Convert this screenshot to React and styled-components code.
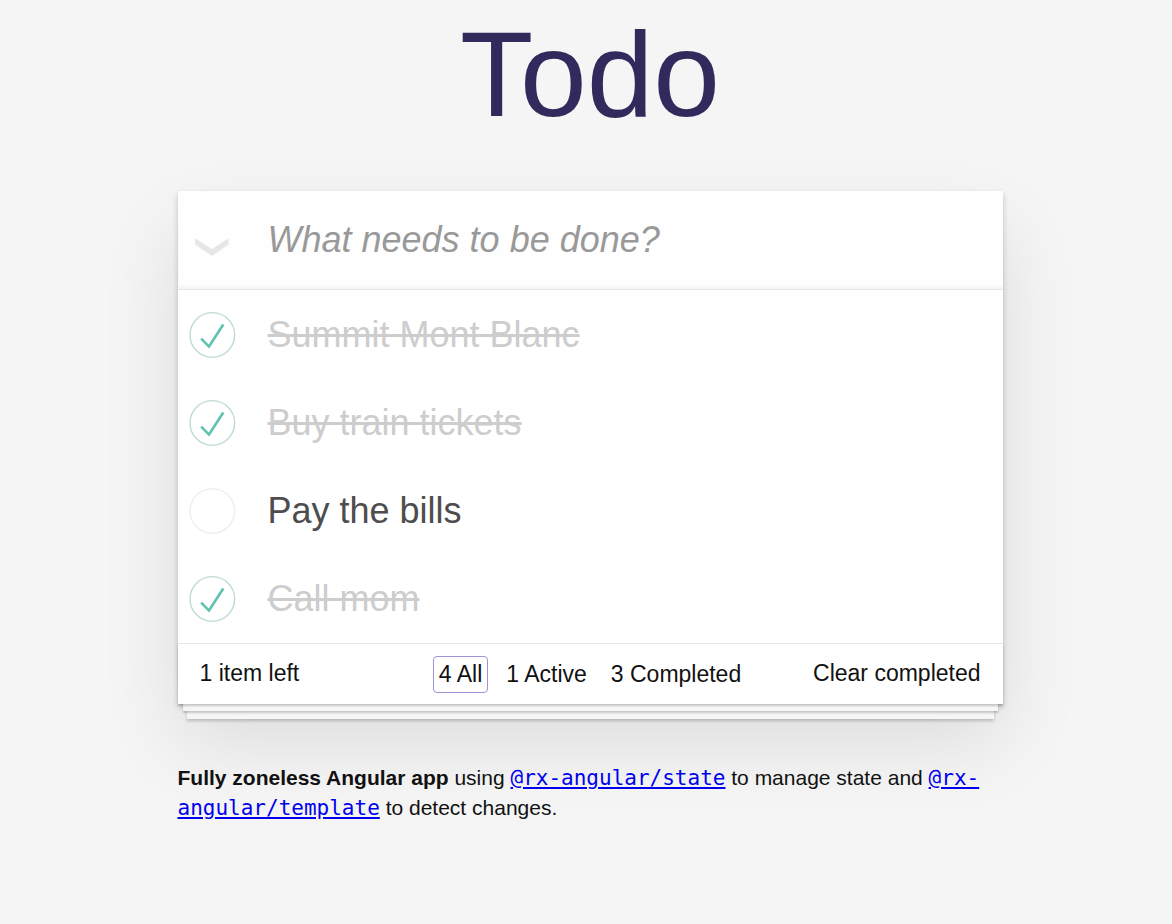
import React, { useState } from "react";
import styled, { createGlobalStyle } from "styled-components";

const GlobalStyle = createGlobalStyle`
  *, *::before, *::after { box-sizing: border-box; }
  body {
    margin: 0;
    background: #f5f5f5;
    color: #111;
    font-family: "Liberation Sans", Arial, sans-serif;
  }
`;

const Page = styled.main`
  padding: 14px 0 100px 8px;
`;

const Column = styled.div`
  max-width: 825px;
  margin: 0 auto;
`;

const Title = styled.h1`
  margin: 0 0 57px;
  font-size: 120px;
  line-height: 120px;
  font-weight: 400;
  text-align: center;
  color: #32295c;
`;

const Card = styled.section`
  background: #fff;
  box-shadow: 0 3px 6px rgba(0, 0, 0, 0.2), 0 38px 75px rgba(0, 0, 0, 0.1);
`;

const EntryRow = styled.form`
  display: grid;
  grid-template-columns: 70px 1fr;
  height: 98px;
  background: #fefefe;
  box-shadow: inset 0 -3px 2px rgba(0, 0, 0, 0.03);
`;

const HiddenCheckbox = styled.input`
  grid-area: 1 / 1;
  appearance: none;
  width: 100%;
  height: 100%;
  margin: 0;
  cursor: pointer;
`;

const Toggle = styled.label`
  display: grid;
  place-items: center;

  svg {
    grid-area: 1 / 1;
    pointer-events: none;
  }
`;

const ToggleAll = styled(Toggle)`
  padding-top: 14px;
`;

const EntryInput = styled.input`
  min-width: 0;
  padding: 0 20px;
  border: 0;
  outline: 0;
  background: transparent;
  color: #4d4d4d;
  font: 36px "Liberation Sans", Arial, sans-serif;

  &::placeholder {
    color: #999;
    font-style: italic;
    opacity: 1;
  }
`;

const List = styled.ul`
  margin: 0;
  padding: 1px 0 0;
  list-style: none;
  border-top: 1px solid #e6e6e6;
`;

const Item = styled.li`
  display: grid;
  grid-template-columns: 70px 1fr;
  min-height: 88px;
`;

const ItemText = styled.label`
  padding: 22px 20px;
  font-size: 36px;
  line-height: 44px;
  color: ${(p) => (p.$done ? "#cdcdcd" : "#4d4d4d")};
  text-decoration: ${(p) => (p.$done ? "line-through" : "none")};
`;

const Footer = styled.footer`
  display: grid;
  grid-template-columns: 1fr auto 1fr;
  align-items: center;
  padding: 12px 22px 11px;
  border-top: 1px solid #e6e6e6;
  background: #fff;
  font-size: 23px;
  line-height: 25px;
  box-shadow: 0 2px 2px rgba(0, 0, 0, 0.2), 0 12px 0 -5px #f6f6f6,
    0 14px 2px -5px rgba(0, 0, 0, 0.2), 0 24px 0 -9px #f6f6f6,
    0 26px 3px -9px rgba(0, 0, 0, 0.2);
`;

const Count = styled.span`
  padding-bottom: 2px;
`;

const Filters = styled.nav`
  display: flex;
  gap: 12px;
`;

const FilterLink = styled.a`
  padding: 5px;
  border: 1px solid ${(p) => (p.$active ? "#a094d6" : "transparent")};
  border-radius: 4px;
  color: inherit;
  text-decoration: none;
`;

const ClearButton = styled.button`
  justify-self: end;
  padding: 0 0 2px;
  border: 0;
  background: none;
  color: inherit;
  font: inherit;
  cursor: pointer;
`;

const Info = styled.p`
  margin: 59px 0 0;
  font-size: 21px;
  line-height: 30px;

  a {
    color: #0000ee;
  }

  code {
    font-family: "DejaVu Sans Mono", monospace;
    font-size: 21px;
    line-height: 20px;
  }
`;

function CheckMark({ done }) {
  return (
    <svg width="47" height="46" viewBox="-2.2 -1.5 105.2 103" aria-hidden="true">
      <circle cx="50" cy="50" r="50" fill="none" strokeWidth="3" stroke={done ? "#bddad5" : "#ededed"} />
      {done && <path fill="#5dc2af" d="M72 25L42 71 27 56l-4 4 20 20 34-52z" />}
    </svg>
  );
}

const initialTodos = [
  { id: 1, text: "Summit Mont Blanc", done: true },
  { id: 2, text: "Buy train tickets", done: true },
  { id: 3, text: "Pay the bills", done: false },
  { id: 4, text: "Call mom", done: true },
];

const matches = {
  All: () => true,
  Active: (t) => !t.done,
  Completed: (t) => t.done,
};

export default function App() {
  const [todos, setTodos] = useState(initialTodos);
  const [filter, setFilter] = useState("All");
  const [draft, setDraft] = useState("");

  const left = todos.filter(matches.Active).length;
  const allDone = left === 0;

  const toggle = (id) => setTodos(todos.map((t) => (t.id === id ? { ...t, done: !t.done } : t)));

  const add = (e) => {
    e.preventDefault();
    if (!draft.trim()) return;
    setTodos([{ id: Date.now(), text: draft.trim(), done: false }, ...todos]);
    setDraft("");
  };

  return (
    <>
      <GlobalStyle />
      <Page>
        <Column>
          <Title>Todo</Title>
          <Card>
            <EntryRow onSubmit={add}>
              <ToggleAll>
                <HiddenCheckbox
                  type="checkbox"
                  aria-label="Mark all as complete"
                  checked={allDone}
                  onChange={() => setTodos(todos.map((t) => ({ ...t, done: !allDone })))}
                />
                <svg width="35" height="18" viewBox="0 0 35 18" aria-hidden="true">
                  <path d="M0 0.3L17 11 33.5 0.3V6.5L17 18 0 6.5z" fill={allDone ? "#737373" : "#e6e6e6"} />
                </svg>
              </ToggleAll>
              <EntryInput
                aria-label="New todo"
                placeholder="What needs to be done?"
                value={draft}
                onChange={(e) => setDraft(e.target.value)}
              />
            </EntryRow>
            <List>
              {todos.filter(matches[filter]).map((t) => (
                <Item key={t.id}>
                  <Toggle>
                    <HiddenCheckbox
                      id={`todo-${t.id}`}
                      type="checkbox"
                      checked={t.done}
                      onChange={() => toggle(t.id)}
                    />
                    <CheckMark done={t.done} />
                  </Toggle>
                  <ItemText htmlFor={`todo-${t.id}`} $done={t.done}>
                    {t.text}
                  </ItemText>
                </Item>
              ))}
            </List>
            <Footer>
              <Count>{`${left} ${left === 1 ? "item" : "items"} left`}</Count>
              <Filters>
                {Object.keys(matches).map((name) => (
                  <FilterLink
                    key={name}
                    href={`#${name.toLowerCase()}`}
                    $active={filter === name}
                    onClick={() => setFilter(name)}
                  >
                    {`${todos.filter(matches[name]).length} ${name}`}
                  </FilterLink>
                ))}
              </Filters>
              <ClearButton type="button" onClick={() => setTodos(todos.filter(matches.Active))}>
                Clear completed
              </ClearButton>
            </Footer>
          </Card>
          <Info>
            <strong>Fully zoneless Angular app</strong> using{" "}
            <a href="#state">
              <code>@rx-angular/state</code>
            </a>{" "}
            to manage state and{" "}
            <a href="#template">
              <code>@rx-angular/template</code>
            </a>{" "}
            to detect changes.
          </Info>
        </Column>
      </Page>
    </>
  );
}
